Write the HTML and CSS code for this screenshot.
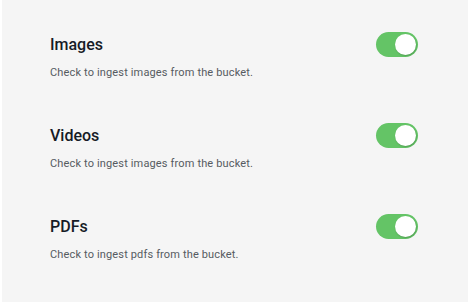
FILE: index.html
```html
<!DOCTYPE html>
<html lang="en">
<head>
<meta charset="utf-8">
<link rel="stylesheet" href="styles.css">
</head>
<body>
<div class="panel">
  <div class="row">
    <div class="head">
      <span class="title">Images</span>
      <span class="toggle on"><span class="knob"></span></span>
    </div>
    <p class="desc">Check to ingest images from the bucket.</p>
  </div>
  <div class="row">
    <div class="head">
      <span class="title">Videos</span>
      <span class="toggle on"><span class="knob"></span></span>
    </div>
    <p class="desc">Check to ingest images from the bucket.</p>
  </div>
  <div class="row">
    <div class="head">
      <span class="title">PDFs</span>
      <span class="toggle on"><span class="knob"></span></span>
    </div>
    <p class="desc">Check to ingest pdfs from the bucket.</p>
  </div>
</div>
</body>
</html>
```
FILE: styles.css
```css
html, body {
  margin: 0;
  padding: 0;
  background: #ffffff;
}
body {
  font-family: Roboto, "Liberation Sans", sans-serif;
}
.panel {
  margin: 0 2px;
  height: 302px;
  box-sizing: border-box;
  background: #f5f5f5;
  padding: 32px 50px 0 48px;
}
.row {
  margin-bottom: 43px;
}
.head {
  display: flex;
  align-items: center;
  justify-content: space-between;
  height: 25px;
}
.title {
  font-size: 16px;
  line-height: 20px;
  font-weight: 500;
  color: #161b26;
}
.toggle {
  position: relative;
  width: 42px;
  height: 25px;
  border-radius: 13px;
  background: #e0e0e0;
}
.toggle.on {
  background: #64c466;
}
.knob {
  position: absolute;
  top: 2px;
  right: 2px;
  width: 21px;
  height: 21px;
  border-radius: 50%;
  background: #ffffff;
  box-shadow: 0.5px 1px 1.5px rgba(0, 0, 0, 0.2);
}
.desc {
  margin: 9px 0 0;
  font-size: 11px;
  line-height: 14px;
  letter-spacing: 0.15px;
  color: #555b61;
}
```
